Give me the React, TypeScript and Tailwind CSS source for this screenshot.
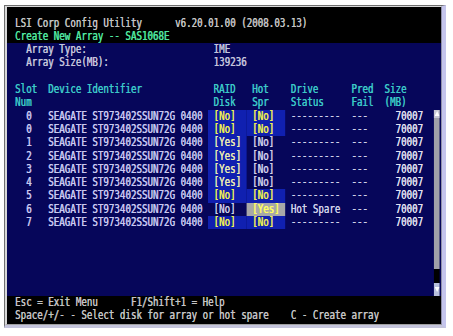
import React from "react";

type Drive = {
  slot: string;
  disk: string;
  diskHl: boolean;
  spr: string;
  spr_mode: "hl" | "none" | "cursor";
  status: string;
};

const drives: Drive[] = [
  { slot: "0", disk: "[No]", diskHl: true, spr: "[No]", spr_mode: "hl", status: "---------" },
  { slot: "0", disk: "[No]", diskHl: true, spr: "[No]", spr_mode: "hl", status: "---------" },
  { slot: "1", disk: "[Yes]", diskHl: true, spr: "[No]", spr_mode: "none", status: "---------" },
  { slot: "2", disk: "[Yes]", diskHl: true, spr: "[No]", spr_mode: "none", status: "---------" },
  { slot: "3", disk: "[Yes]", diskHl: true, spr: "[No]", spr_mode: "none", status: "---------" },
  { slot: "4", disk: "[Yes]", diskHl: true, spr: "[No]", spr_mode: "none", status: "---------" },
  { slot: "5", disk: "[No]", diskHl: true, spr: "[No]", spr_mode: "hl", status: "---------" },
  { slot: "6", disk: "[No]", diskHl: false, spr: "[Yes]", spr_mode: "cursor", status: "Hot Spare" },
  { slot: "7", disk: "[No]", diskHl: true, spr: "[No]", spr_mode: "hl", status: "---------" },
];

function Row({ children, className = "" }: { children?: React.ReactNode; className?: string }) {
  return (
    <div className={`flex pl-[3.1px] h-[13.3px] leading-[13.3px] whitespace-pre ${className}`}>{children}</div>
  );
}

function DriveRow({ d }: { d: Drive }) {
  const diskCls = d.diskHl
    ? d.disk === "[Yes]"
      ? "bg-[#1020b0] text-[#ececb0]"
      : "bg-[#1020b0] text-[#f0f050]"
    : "text-[#d0d0e8]";
  const sprCls =
    d.spr_mode === "hl"
      ? "bg-[#1020b0] text-[#f0f050]"
      : d.spr_mode === "cursor"
      ? "bg-[#a8a8a8] text-[#ffff60]"
      : "text-[#d0d0e8]";
  return (
    <Row className="text-[#c8c8f0]">
      <div className="w-[7ch] shrink-0 pl-[3ch]">{d.slot}</div>
      <div className="w-[29ch] shrink-0">SEAGATE ST973402SSUN72G 0400</div>
      <div className={`w-[7ch] shrink-0 pl-[1ch] ${diskCls}`}>{d.disk}</div>
      <div className={`w-[7ch] shrink-0 pl-[1ch] ${sprCls}`}>{d.spr}</div>
      <div className="w-[11ch] shrink-0 pl-[1ch] text-[#d0d0e8]">{d.status}</div>
      <div className="w-[6ch] shrink-0 pl-[1ch] text-[#d0d0e8]">---</div>
      <div className="w-[10ch] shrink-0 pl-[3ch] text-[#e0e0f0]">70007</div>
    </Row>
  );
}

export default function App() {
  return (
    <div className="w-[453px] h-[336px] bg-white overflow-hidden pt-[5px] pl-[4px]">
      <div className="w-[442px] h-[323px] border-l border-t border-[#707070] border-r-[4px] border-b-[3px] border-r-[#c4c4ec] border-b-[#c4c4dc]">
        <div className="w-full h-full border-l-2 border-t border-[#d8d8d8] border-r border-b border-r-[#9090a8] border-b-[#a0a0a0]">
          <div className="w-[434px] h-[317px] bg-black overflow-hidden">
            <div
              className="w-[540px] h-full origin-top-left [transform:scaleX(0.804)] pt-[9.6px] text-[11.4px] [text-shadow:0.45px_0_0_currentColor]"
              style={{ fontFamily: '"DejaVu Sans Mono", "Liberation Mono", monospace' }}
            >
              <Row className="text-[#c4c4c4]">
                <div className="w-[30ch] shrink-0 pl-[1ch]">LSI Corp Config Utility</div>
                <div>v6.20.01.00 (2008.03.13)</div>
              </Row>
              <Row className="text-[#50e6a0]">
                <div className="pl-[1ch]">Create New Array -- SAS1068E</div>
              </Row>

              <div className="bg-[#06065a] flex">
                <div className="flex flex-col">
                  <Row className="text-[#c4c4dc]">
                    <div className="w-[37ch] shrink-0 pl-[3ch]">Array Type:</div>
                    <div>IME</div>
                  </Row>
                  <Row className="text-[#c4c4dc]">
                    <div className="w-[37ch] shrink-0 pl-[3ch]">Array Size(MB):</div>
                    <div>139236</div>
                  </Row>
                  <Row />
                  <Row className="text-[#3cc8c8]">
                    <div className="w-[7ch] shrink-0 pl-[1ch]">Slot</div>
                    <div className="w-[29ch] shrink-0">Device Identifier</div>
                    <div className="w-[7ch] shrink-0 pl-[1ch]">RAID</div>
                    <div className="w-[7ch] shrink-0 pl-[1ch]">Hot</div>
                    <div className="w-[11ch] shrink-0 pl-[1ch]">Drive</div>
                    <div className="w-[6ch] shrink-0 pl-[1ch]">Pred</div>
                    <div className="w-[10ch] shrink-0 pl-[1ch]">Size</div>
                  </Row>
                  <Row className="text-[#3cc8c8]">
                    <div className="w-[7ch] shrink-0 pl-[1ch]">Num</div>
                    <div className="w-[29ch] shrink-0"></div>
                    <div className="w-[7ch] shrink-0 pl-[1ch]">Disk</div>
                    <div className="w-[7ch] shrink-0 pl-[1ch]">Spr</div>
                    <div className="w-[11ch] shrink-0 pl-[1ch]">Status</div>
                    <div className="w-[6ch] shrink-0 pl-[1ch]">Fail</div>
                    <div className="w-[10ch] shrink-0 pl-[1ch]">(MB)</div>
                  </Row>
                  {drives.map((d, i) => (
                    <DriveRow key={i} d={d} />
                  ))}
                  <Row />
                  <Row />
                  <Row />
                  <Row />
                  <Row />
                </div>
                <div className="w-[1ch] shrink-0 flex flex-col">
                  <div className="h-[66.5px]" />
                  <div className="h-[13.3px] bg-[#a0a0a8] flex flex-col">
                    <div className="h-[8px] bg-[#c8c8d4] flex items-center justify-center">
                      <svg width="6" height="5" viewBox="0 0 6 5">
                        <path d="M3 0 L6 5 L0 5 Z" fill="#ffffff" />
                      </svg>
                    </div>
                  </div>
                  <div className="flex-1 bg-[#a0a0a8]" />
                  <div className="h-[13.3px] bg-black" />
                  <div className="h-[13.3px] bg-[#b8c0dc] flex items-center justify-center">
                    <svg width="6" height="5" viewBox="0 0 6 5">
                      <path d="M0 0 L6 0 L3 5 Z" fill="#ffffff" />
                    </svg>
                  </div>
                </div>
              </div>

              <Row className="text-[#c4c4c4]">
                <div className="w-[22ch] shrink-0 pl-[1ch]">Esc = Exit Menu</div>
                <div>F1/Shift+1 = Help</div>
              </Row>
              <Row className="text-[#c4c4c4]">
                <div className="w-[51ch] shrink-0 pl-[1ch]">Space/+/- - Select disk for array or hot spare</div>
                <div>C - Create array</div>
              </Row>
            </div>
          </div>
        </div>
      </div>
    </div>
  );
}
